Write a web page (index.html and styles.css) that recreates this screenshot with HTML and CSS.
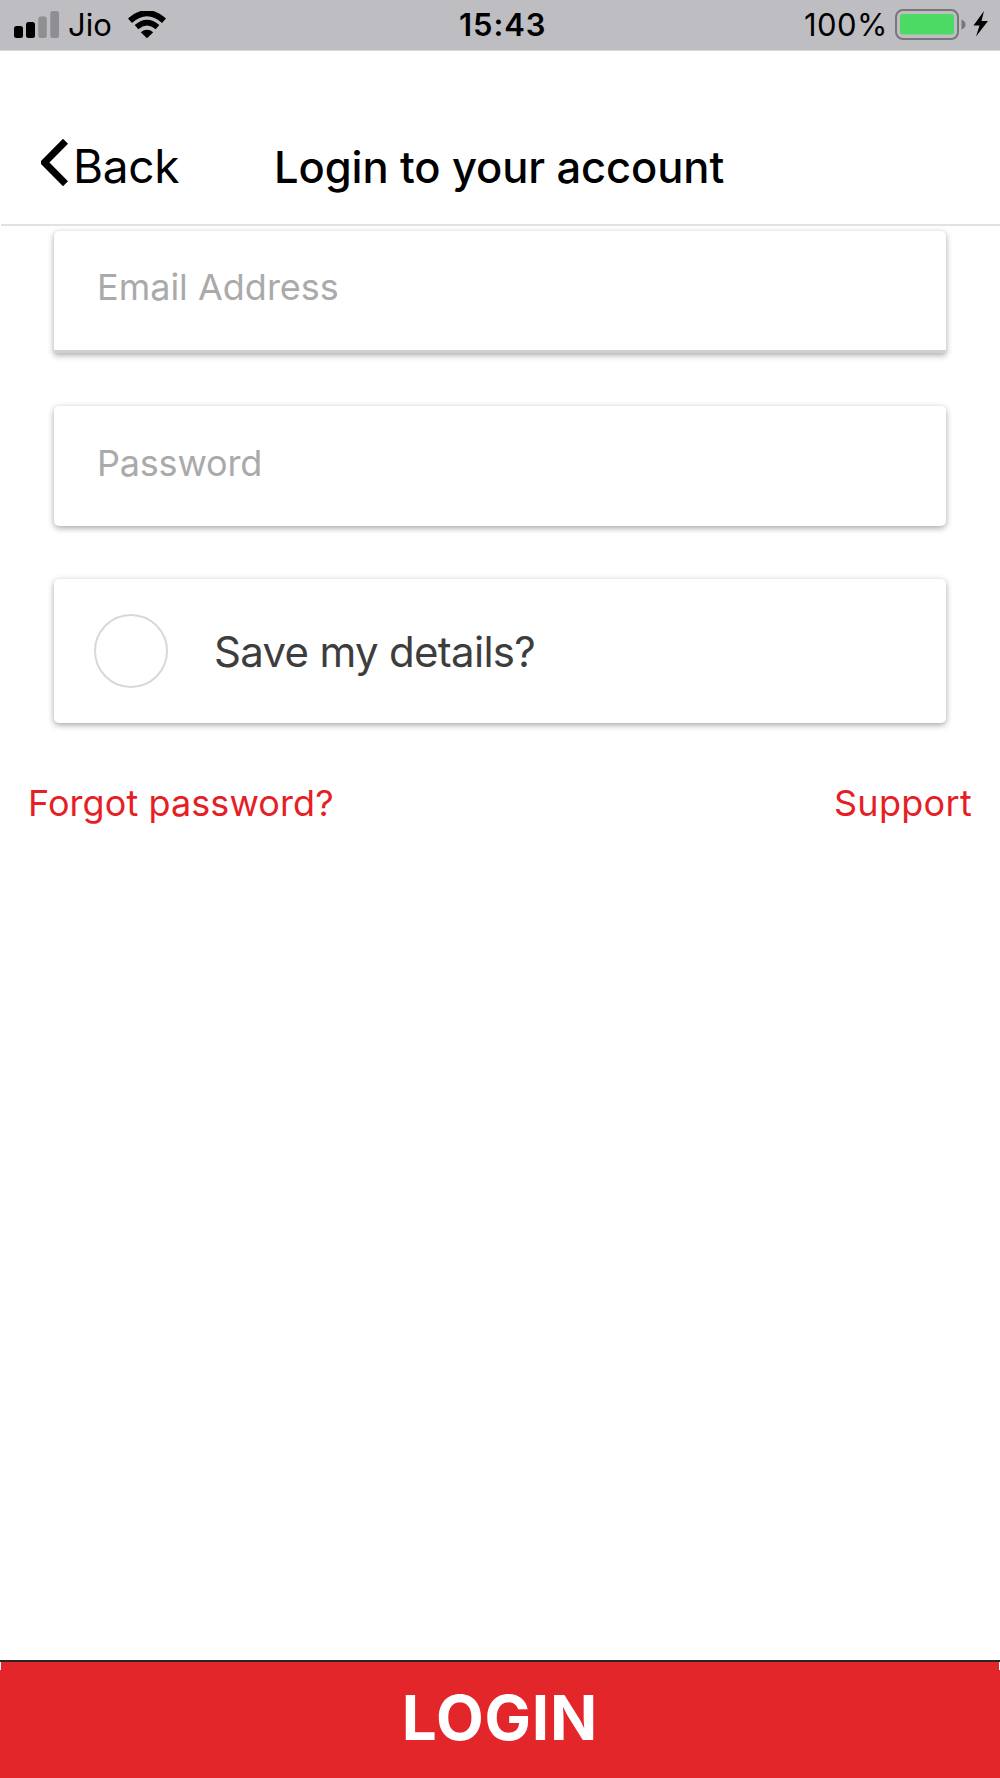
FILE: index.html
```html
<!DOCTYPE html>
<html lang="en">
<head>
<meta charset="utf-8">
<title>Login to your account</title>
<link rel="stylesheet" href="styles.css">
</head>
<body>
<div class="screen">
  <header class="status">
    <div class="status-side">
      <svg class="signal" width="46" height="28" viewBox="0 0 46 28">
        <rect x="0" y="15" width="9" height="12" rx="2.5"/>
        <rect x="12" y="11" width="9" height="16" rx="2.5"/>
        <rect class="off" x="24.3" y="5.5" width="8.5" height="21.5" rx="2.5"/>
        <rect class="off" x="36.3" y="0" width="8.7" height="27" rx="2.5"/>
      </svg>
      <span class="carrier">Jio</span>
      <svg class="wifi" width="38" height="28" viewBox="0 0 38 28">
        <path d="M2 9.8Q19-5.4 36 9.8" stroke-width="6"/>
        <path d="M8.5 16.2Q19 7.2 29.5 16.2" stroke-width="5.6"/>
        <path class="dot" d="M12.8 21.2Q19 16.5 25.2 21.2L19 27.2Z"/>
      </svg>
    </div>
    <span class="clock">15:43</span>
    <div class="status-side">
      <span class="percent">100%</span>
      <svg class="battery" width="94" height="32" viewBox="0 0 94 32">
        <rect x="1" y="1" width="62" height="29" rx="7" fill="none" stroke="#77777b" stroke-width="2"/>
        <rect x="5" y="5" width="54" height="20.5" rx="2.5" fill="#4cd964"/>
        <path d="M66.5 10.5Q70.5 12 70.5 15.5T66.5 20.5Z" fill="#77777b"/>
        <path d="M89 2L78.5 16.5H84.5L81 27.5L93 12H86.5Z" fill="#000"/>
      </svg>
    </div>
  </header>

  <nav class="nav">
    <a class="back">
      <svg width="27" height="48" viewBox="0 0 27 48"><path d="M24.5 2.2L3.5 23.5L24.5 44.8" fill="none" stroke="#000" stroke-width="7"/></svg>
      <span class="back-label">Back</span>
    </a>
    <h1 class="title">Login to your account</h1>
  </nav>

  <form class="form">
    <input class="card field email" type="email" placeholder="Email Address">
    <input class="card field password" type="password" placeholder="Password">
    <label class="card save"><span class="radio"></span><span class="save-label">Save my details?</span></label>
  </form>

  <div class="links">
    <a class="forgot">Forgot password?</a>
    <a class="support">Support</a>
  </div>

  <button class="login"><span class="login-label">LOGIN</span></button>
</div>
</body>
</html>
```
FILE: styles.css
```css
* { box-sizing: border-box; }
body { margin: 0; background: #fff; font-family: Inter, "Liberation Sans", sans-serif; color: #000; }
.screen { width: 1000px; height: 1778px; display: flex; flex-direction: column; }
.status { height: 51px; background: #bebdc2; border-bottom: 1px solid #d8d8da; display: grid; grid-template-columns: 459px 1fr 196px; font-size: 31px; line-height: 50px; }
.status-side { display: flex; align-items: center; }
.signal { margin-left: 14px; }
.signal .off { fill: #8f8e92; }
.carrier { margin-left: 8px; }
.wifi { margin-left: 16px; }
.wifi path { fill: none; stroke: #000; }
.wifi .dot { fill: #000; stroke: none; }
.clock { font-weight: 600; letter-spacing: .9px; }
.percent { letter-spacing: .4px; }
.battery { margin-left: 7px; }
.nav { height: 175px; border-bottom: 2px solid #e2e2e2; display: flex; margin-left: 1px; padding-top: 88px; }
.back { display: flex; flex: none; width: 272px; padding-left: 40px; }
.back-label { font-size: 46px; line-height: 54px; margin-left: 5px; letter-spacing: -.3px; }
.title { margin: 0 0 0 1px; font-size: 43.5px; line-height: 56px; font-weight: 500; letter-spacing: -.1px; }
.form { display: flex; flex-direction: column; padding: 5px 54px 0; }
.card { background: #fff; border: 0; border-radius: 5px; box-shadow: 0 2px 6px rgba(0,0,0,.36); }
.field { font: 36px/44px Inter, "Liberation Sans", sans-serif; padding: 0 43px 7px; outline: 0; }
.field::placeholder { color: #aaa; opacity: 1; }
.email { height: 122px; border-bottom: 3px solid #d0d0d0; border-radius: 5px 5px 0 0; }
.password { height: 120px; margin-top: 53px; letter-spacing: -.2px; }
.save { height: 144px; margin-top: 53px; display: flex; align-items: center; padding-left: 40px; }
.radio { width: 74px; height: 74px; border: 2px solid #d8d8d8; border-radius: 50%; }
.save-label { margin-left: 46px; padding-top: 1px; font-size: 42px; letter-spacing: -.7px; color: #3d3d3d; }
.links { display: flex; justify-content: space-between; margin-top: 58px; padding: 0 28px; color: #e61e25; font-size: 36px; line-height: 44px; }
.forgot { letter-spacing: .08px; }
.support { letter-spacing: .3px; }
.login { height: 118px; margin-top: auto; border: 0; border-top: 2px solid #2b2526; background: linear-gradient(#fff, #fff) 0 0 / 1px 8px no-repeat, linear-gradient(#fff, #fff) 100% 0 / 1px 8px no-repeat, #e3262a; color: #fff; padding: 0 0 5px; }
.login-label { font: 700 62px/100px Inter, "Liberation Sans", sans-serif; letter-spacing: .8px; }
```
